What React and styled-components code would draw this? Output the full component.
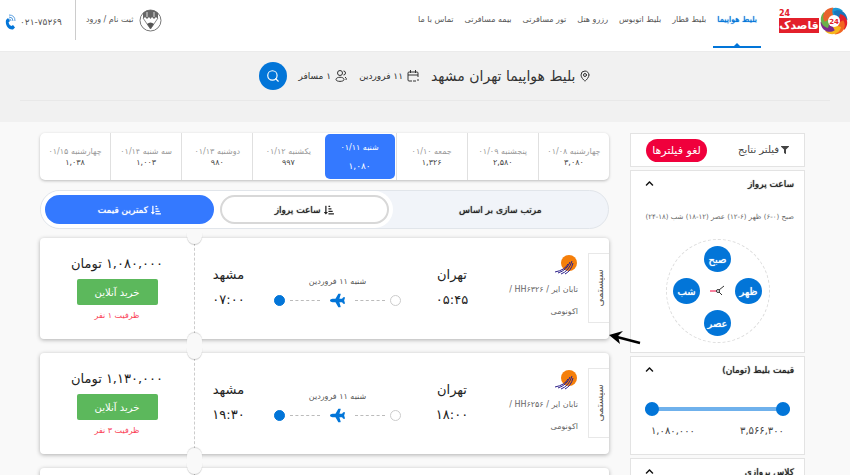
import React, { Component } from 'react';
import styled, { createGlobalStyle, css } from 'styled-components';
import { FaChevronUp, FaFilter, FaPlane, FaSortAmountDownAlt } from 'react-icons/fa';
import { LuMapPin, LuSearch } from 'react-icons/lu';

const GlobalStyle = createGlobalStyle`
	* {
		box-sizing: border-box;
	}

	html {
		scrollbar-width: none;
	}

	body {
		margin: 0;
		background: #f9f9f9;
		color: #222;
		font-family: "DejaVu Sans", sans-serif;
		font-size: 8px;
		line-height: 12px;
	}

	button, input {
		font-family: inherit;
	}

	h1, h2, p, ul {
		margin: 0;
		padding: 0;
		font-weight: normal;
	}

	svg {
		flex: none;
	}
`

// the bold cut is too wide for the small labels
const semiBold = css`
	text-shadow: 0 0 1px currentColor;
`

const Page = styled.div`
	min-height: 100vh;
`

const Header = styled.header`
	height: 51px;
	padding: 0 2px 0 5px;

	display: flex;
	align-items: flex-start;

	background: #fff;
`

const Logo = styled.a`
	margin-top: 7px;

	display: flex;
	align-items: center;
	gap: 1px;

	text-decoration: none;
`

const LogoName = styled.span`
	width: 40px;

	display: flex;
	flex-direction: column;

	background: linear-gradient(transparent 8px, #e3202b 8px);
	color: #fff;
	font-size: 11px;
	font-weight: bold;
	line-height: 15px;
	text-align: center;
	white-space: nowrap;
`

const LogoNumber = styled.span`
	color: #e3202b;
	font-size: 8px;
	line-height: 8px;
	text-align: left;
`

const Nav = styled.nav`
	height: 48px;
	margin-right: 18px;

	display: flex;
	gap: 3px;
`

const NavLink = styled.a`
	position: relative;
	padding: 14px 4px 0;

	color: #555;
	text-decoration: none;
	white-space: nowrap;

	${props => props.$active && css`
		${semiBold}
		color: #0275d8;
		border-bottom: 2px solid #0275d8;

		&::after {
			content: "";
			position: absolute;
			left: 50%;
			bottom: 0;
			margin-left: -3px;
			border: 3px solid transparent;
			border-top: 0;
			border-bottom-color: #0275d8;
		}
	`}
`

const Account = styled.a`
	height: 40px;
	margin-right: auto;
	padding-left: 10px;

	display: flex;
	align-items: center;
	gap: 5px;

	border-left: 1px solid #ccc;
	color: #555;
	text-decoration: none;
	white-space: nowrap;
`

const Phone = styled.a`
	height: 44px;
	margin-right: 13px;

	display: flex;
	align-items: center;
	gap: 4px;

	color: #555;
	font-size: 9px;
	text-decoration: none;
`

const SearchBand = styled.section`
	padding: 0 20px 21px;

	background: #f1f1f1;
	border-top: 1px solid #ebebeb;
`

const SearchRow = styled.div`
	height: 49px;

	display: flex;
	align-items: center;
	justify-content: center;
	gap: 12px;

	border-bottom: 1px solid #e8e8e8;
`

const SearchItem = styled.span`
	display: flex;
	align-items: center;
	gap: 4px;

	color: #333;
	font-size: 9px;
	white-space: nowrap;
`

const Title = styled.h1`
	font-size: 14px;
	line-height: 20px;
`

const SearchButton = styled.button`
	width: 28px;
	height: 28px;
	padding: 0;

	display: flex;
	align-items: center;
	justify-content: center;

	background: #0275d8;
	border: 0;
	border-radius: 50%;
	color: #fff;
`

const Content = styled.div`
	padding: 11px 45px 0 40px;

	display: flex;
	align-items: flex-start;
	gap: 21px;
`

const Sidebar = styled.aside`
	width: 175px;
	flex: none;

	display: flex;
	flex-direction: column;
	gap: 3px;
`

const Box = styled.section`
	background: #fff;
	border: 1px solid #e3e3e3;
`

const FilterBar = styled(Box)`
	height: 34px;
	padding: 0 15px;

	display: flex;
	align-items: center;
	justify-content: space-between;
`

const FilterTitle = styled.h2`
	display: flex;
	align-items: center;
	gap: 2px;

	color: #444;
	font-size: 10px;
`

const ClearButton = styled.button`
	width: 61px;
	height: 23px;
	padding: 0;

	background: #f0003c;
	border: 0;
	border-radius: 12px;
	color: #fff;
	font-size: 11px;
	white-space: nowrap;
`

const BoxHead = styled.h2`
	height: 25px;
	padding: 0 10px;

	display: flex;
	align-items: center;
	justify-content: space-between;

	${semiBold}
	color: #222;
	font-size: 9px;
`

const Collapse = styled.button`
	padding: 0 4px;

	display: flex;

	background: none;
	border: 0;
	color: #111;
`

const TimeBody = styled.div`
	padding: 15px 10px 9px;
`

const TimeNote = styled.p`
	color: #666;
	font-size: 7px;
	white-space: nowrap;
`

const Clock = styled.div`
	width: 104px;
	height: 104px;
	margin: 16px auto 0;

	display: grid;
	grid-template-columns: repeat(3, 27px);
	grid-template-rows: repeat(3, 26px);
	gap: 6px 4px;
	align-content: center;
	justify-content: center;

	border: 1px dashed #ddd;
	border-radius: 50%;
`

const ClockButton = styled.button`
	grid-area: ${props => props.$area};
	padding: 0;

	${semiBold}
	background: #0275d8;
	border: 0;
	border-radius: 50%;
	color: #fff;
	font-size: 10px;
`

const ClockHands = styled.svg`
	grid-area: 2 / 2;
	place-self: center;
`

const PriceBody = styled.div`
	padding: 20px 14px 16px;
`

const Slider = styled.div`
	position: relative;
	height: 14px;

	display: flex;
	align-items: center;

	&::before {
		content: "";
		height: 4px;
		flex: 1;
		background: #6fb1ec;
	}
`

const Range = styled.input`
	position: absolute;
	inset: 0;
	width: 100%;
	height: 100%;
	margin: 0;

	appearance: none;
	background: transparent;
	direction: ltr;
	pointer-events: none;

	&::-webkit-slider-thumb {
		width: 14px;
		height: 14px;
		appearance: none;
		background: #0275d8;
		border-radius: 50%;
		pointer-events: auto;
	}
`

const PriceLimits = styled.div`
	padding: 8px 6px 0;

	display: flex;
	justify-content: space-between;

	color: #444;
	font-size: 10px;
	line-height: 14px;
`

const Main = styled.main`
	flex: 1;
	min-width: 0;
`

const Days = styled.div`
	height: 47px;

	display: flex;

	background: #fff;
	border-radius: 5px;
	box-shadow: 0 1px 3px rgba(0, 0, 0, .25);
`

const Day = styled.button`
	padding: 0;
	flex: 1 1 0;
	min-width: 0;

	background: none;
	border: 0;
	border-left: 1px solid #e0e0e0;
	color: #444;
	font-size: 8px;
	line-height: 11px;
	white-space: nowrap;

	&:last-child {
		border-left: 0;
	}

	${props => props.$active && css`
		margin: 1px;
		background: #3479ff;
		border: 0;
		border-radius: 5px;
		color: #fff;
		font-size: 9px;
		line-height: 18px;
	`}
`

const DayName = styled.span`
	display: block;

	color: ${props => props.$active ? '#fff' : '#999'};
	font-size: 8px;
`

const Sort = styled.div`
	height: 39px;
	margin-top: 10px;

	display: flex;

	background: #f1f4f9;
	border: 1px solid #e1e5ea;
	border-radius: 20px;
`

const SortLabel = styled.span`
	flex: 1;
	align-self: center;

	${semiBold}
	color: #222;
	font-size: 9px;
	text-align: center;
`

const SortOptions = styled.div`
	width: 62%;
	padding: 4px;

	display: flex;
	gap: 6px;

	background: #fff;
	border-radius: 19px;
`

const SortButton = styled.button`
	padding: 0;
	flex: 1;

	display: flex;
	align-items: center;
	justify-content: center;
	gap: 3px;

	${semiBold}
	background: ${props => props.$active ? '#3479ff' : '#fff'};
	border: 2px solid ${props => props.$active ? '#3479ff' : '#d8d8d8'};
	border-radius: 15px;
	color: ${props => props.$active ? '#fff' : '#222'};
	font-size: 9px;
`

const Card = styled.article`
	height: 101px;
	margin-top: ${props => props.$first ? 9 : 14}px;

	display: grid;
	grid-template-columns: 21px 97px 78px 1fr 67px 155px;

	background: #fff;
	border-radius: 4px;
	box-shadow: 0 1px 4px rgba(0, 0, 0, .3);
`

const Tab = styled.span`
	height: 70px;
	margin-top: 15px;

	display: flex;
	align-items: center;
	justify-content: center;

	border: 1px solid #e8e8e8;
	border-right: 0;
	color: #555;
	font-size: 10px;
	line-height: 19px;
`

const TabText = styled.span`
	writing-mode: vertical-rl;
	transform: rotate(180deg);
`

const Airline = styled.div`
	padding: 16px 10px 0 0;

	color: #666;
	font-size: 8px;
	white-space: nowrap;

	svg {
		display: block;
	}

	p {
		padding-top: 6px;
		line-height: 16px;
	}
`

const Stop = styled.div`
	padding-top: 24px;

	color: #222;
	font-size: 13px;
	line-height: 25px;
	text-align: center;
`

const Route = styled.div`
	padding: 37px 12px 0;

	color: #555;
	font-size: 8px;
	line-height: 14px;
	text-align: center;
`

const Line = styled.div`
	height: 22px;

	display: flex;
	align-items: center;
	gap: 5px;

	color: #0275d8;

	svg {
		margin: 0 5px;
		transform: rotate(180deg);
	}
`

const Dash = styled.span`
	flex: 1;
	border-top: 1px dashed #bbb;
`

const Dot = styled.span`
	width: 11px;
	height: 11px;

	background: ${props => props.$filled ? '#0275d8' : '#fff'};
	border: 1px solid ${props => props.$filled ? '#0275d8' : '#ccc'};
	border-radius: 50%;
`

const Buy = styled.div`
	position: relative;
	padding: 15px 0 0;

	display: flex;
	flex-direction: column;
	align-items: center;

	border-right: 1px dashed #ccc;

	&::before, &::after {
		content: "";
		position: absolute;
		right: -8px;
		width: 15px;
		height: 12px;
		background: #f9f9f9;
	}

	&::before {
		top: -6px;
		border-radius: 0 0 8px 8px;
		box-shadow: 0 1px 1px rgba(0, 0, 0, .2);
	}

	&::after {
		bottom: -6px;
		border-radius: 8px 8px 0 0;
		box-shadow: 0 -1px 1px rgba(0, 0, 0, .15);
	}
`

const Price = styled.strong`
	color: #222;
	font-size: 13px;
	font-weight: normal;
	line-height: 22px;
`

const BuyButton = styled.button`
	width: 81px;
	height: 26px;
	margin-top: 4px;
	padding: 0;

	background: #5cb85c;
	border: 0;
	border-radius: 2px;
	color: #fff;
	font-size: 10px;
`

const Capacity = styled.span`
	margin-top: 4px;

	color: #fa3e54;
	font-size: 8px;
	line-height: 14px;
`

const CardWrap = styled.div`
	position: relative;
`

const Pointer = styled.svg`
	position: absolute;
	right: -32px;
	bottom: -6px;
`

const links = ['بلیط قطار', 'بلیط اتوبوس', 'رزرو هتل', 'تور مسافرتی', 'بیمه مسافرتی', 'تماس با ما'];

const days = [
	{ name: 'چهارشنبه ۰۱/۰۸', price: '۳,۰۸۰' },
	{ name: 'پنجشنبه ۰۱/۰۹', price: '۲,۵۸۰' },
	{ name: 'جمعه ۰۱/۱۰', price: '۱,۳۲۶' },
	{ name: 'شنبه ۰۱/۱۱', price: '۱,۰۸۰', active: true },
	{ name: 'یکشنبه ۰۱/۱۲', price: '۹۹۷' },
	{ name: 'دوشنبه ۰۱/۱۳', price: '۹۸۰' },
	{ name: 'سه شنبه ۰۱/۱۴', price: '۱,۰۰۳' },
	{ name: 'چهارشنبه ۰۱/۱۵', price: '۱,۰۳۸' },
];

const flights = [
	{ code: 'HH۶۳۲۶', start: '۰۵:۴۵', end: '۰۷:۰۰', price: '۱,۰۸۰,۰۰۰', seats: '۱', pointer: true },
	{ code: 'HH۶۲۵۶', start: '۱۸:۰۰', end: '۱۹:۳۰', price: '۱,۱۳۰,۰۰۰', seats: '۳' },
];

const petals = ['#1b9ad6', '#1b75bb', '#e3202b', '#f26522', '#f7b51c', '#7b2a8c', '#6ab04a', '#e8622c'];

const LogoMark = () => (
	<svg width="28" height="28" viewBox="-14 -14 28 28">
		{petals.map((color, i) => (
			<path key={color} d="M-7-6C-6-13 3-16 9-10C6-9 4-7 3-3Z" fill={color} transform={`rotate(${i * 45})`} />
		))}
		<circle r="6" fill="#fff" />
		<text y="3" fill="#e3202b" fontSize="7" fontWeight="bold" textAnchor="middle" direction="ltr">24</text>
	</svg>
)

const PencilIcon = () => (
	<svg width="23" height="23" viewBox="0 0 23 23">
		<circle cx="11.500" cy="11.500" r="10.500" fill="#fff" stroke="#777" />
		<path d="M4 4C8 0 15 0 19 4V10L17 8L15 10L13 8L11.500 10L10 8L8 10L6 8L4 10Z" fill="#666" />
		<path d="M8 3V8M15 3V8" stroke="#ddd" />
		<path d="M4 9L11.500 20L19 9" fill="none" stroke="#888" />
		<path d="M8 15Q11.500 12 15 15L11.500 20Z" fill="#555" />
	</svg>
)

const PhoneIcon = () => (
	<svg width="11" height="16" viewBox="0 0 11 16">
		<path d="M1 6L3 4L5 7L3.500 8.500Q4 11 6.500 12L8 11L10 13.500L8 15.500C3 16 0 11 1 6Z" fill="#0275d8" />
		<path d="M4 1Q10 1 10 7M4 3Q8 3 8 7M4 5Q6 5 6 7" fill="none" stroke="#5a9fe0" />
	</svg>
)

const CalendarIcon = () => (
	<svg width="12" height="12" viewBox="0 0 12 12" fill="none" stroke="#333">
		<path d="M5 11H2Q1 11 1 10V3Q1 2 2 2H10Q11 2 11 3V7M1 5H11M3.500 0V3M8.500 0V3M6 11H9M11 9V11" />
	</svg>
)

const UsersIcon = () => (
	<svg width="12" height="12" viewBox="0 0 12 12" fill="none" stroke="#333">
		<circle cx="5" cy="3" r="2.500" />
		<path d="M1 9.500C1 6.500 9 6.500 9 9.500C9 12 1 12 1 9.500ZM8.500 1Q10.500 1 10.500 3T8.500 5M10 7Q12 8 11 10" />
	</svg>
)

const AirlineIcon = () => (
	<svg width="23" height="22" viewBox="0 0 23 22">
		<circle cx="14" cy="9" r="8" fill="#f57f0a" />
		<path d="M0 18Q10 16 13 10M3 19Q12 16 15 8M6 20Q14 17 17 7M10 20Q16 17 18 9" fill="none" stroke="#2b1f8a" strokeWidth="1" />
	</svg>
)

const Head = ({ children }) => (
	<BoxHead>
		{children}
		<Collapse aria-label={children}><FaChevronUp size={9} /></Collapse>
	</BoxHead>
)

const Flight = ({ flight, first }) => (
	<CardWrap>
		<Card $first={first}>
			<Tab><TabText>سیستمی</TabText></Tab>
			<Airline>
				<AirlineIcon />
				<p>تابان ایر / {flight.code} /</p>
				<p>اکونومی</p>
			</Airline>
			<Stop>
				<p>تهران</p>
				<p>{flight.start}</p>
			</Stop>
			<Route>
				<p>شنبه ۱۱ فروردین</p>
				<Line>
					<Dot />
					<Dash />
					<FaPlane size={15} />
					<Dash />
					<Dot $filled />
				</Line>
			</Route>
			<Stop>
				<p>مشهد</p>
				<p>{flight.end}</p>
			</Stop>
			<Buy>
				<Price>{flight.price} تومان</Price>
				<BuyButton>خرید آنلاین</BuyButton>
				<Capacity>ظرفیت {flight.seats} نفر</Capacity>
			</Buy>
		</Card>
		{flight.pointer && (
			<Pointer width="32" height="14" viewBox="0 0 32 14">
				<path d="M31 12L8 6" stroke="#000" strokeWidth="2.500" />
				<path d="M0 4L14 0L9 5L11 13Z" />
			</Pointer>
		)}
	</CardWrap>
)

class App extends Component {
	render() {
		return(
			<Page dir="rtl" lang="fa">
				<GlobalStyle />
				<Header>
					<Logo href="#">
						<LogoMark />
						<LogoName>
							<LogoNumber>24</LogoNumber>
							قاصدک
						</LogoName>
					</Logo>
					<Nav>
						<NavLink href="#" $active>بلیط هواپیما</NavLink>
						{links.map(link => <NavLink href="#" key={link}>{link}</NavLink>)}
					</Nav>
					<Account href="#">
						<PencilIcon />
						ثبت نام / ورود
					</Account>
					<Phone href="#">
						<span dir="ltr">۰۲۱-۷۵۲۶۹</span>
						<PhoneIcon />
					</Phone>
				</Header>
				<SearchBand>
					<SearchRow>
						<SearchItem>
							<LuMapPin size={12} />
							<Title>بلیط هواپیما تهران مشهد</Title>
						</SearchItem>
						<SearchItem><CalendarIcon />۱۱ فروردین</SearchItem>
						<SearchItem><UsersIcon />۱ مسافر</SearchItem>
						<SearchButton aria-label="جستجو"><LuSearch size={14} /></SearchButton>
					</SearchRow>
				</SearchBand>
				<Content>
					<Sidebar>
						<FilterBar>
							<FilterTitle><FaFilter size={8} />فیلتر نتایج</FilterTitle>
							<ClearButton>لغو فیلترها</ClearButton>
						</FilterBar>
						<Box>
							<Head>ساعت پرواز</Head>
							<TimeBody>
								<TimeNote>صبح (۰-۶) ظهر (۶-۱۲) عصر (۱۲-۱۸) شب (۱۸-۲۴)</TimeNote>
								<Clock>
									<ClockButton $area="1 / 2">صبح</ClockButton>
									<ClockButton $area="2 / 1">ظهر</ClockButton>
									<ClockHands width="15" height="12" viewBox="0 0 15 12" fill="none">
										<path d="M0 6H7" stroke="#f0003c" />
										<path d="M9 5L14 1M9 7L12 10" stroke="#333" />
										<circle cx="8" cy="6" r="1.500" stroke="#333" />
									</ClockHands>
									<ClockButton $area="2 / 3">شب</ClockButton>
									<ClockButton $area="3 / 2">عصر</ClockButton>
								</Clock>
							</TimeBody>
						</Box>
						<Box>
							<Head>قیمت بلیط (تومان)</Head>
							<PriceBody>
								<Slider>
									<Range type="range" aria-label="حداقل قیمت" min="1080000" max="3566300" defaultValue="1080000" />
									<Range type="range" aria-label="حداکثر قیمت" min="1080000" max="3566300" defaultValue="3566300" />
								</Slider>
								<PriceLimits>
									<span>۳,۵۶۶,۳۰۰</span>
									<span>۱,۰۸۰,۰۰۰</span>
								</PriceLimits>
							</PriceBody>
						</Box>
						<Box>
							<Head>کلاس پروازی</Head>
						</Box>
					</Sidebar>
					<Main>
						<Days>
							{days.map(day => (
								<Day key={day.name} $active={day.active}>
									<DayName $active={day.active}>{day.name}</DayName>
									{day.price}
								</Day>
							))}
						</Days>
						<Sort>
							<SortLabel>مرتب سازی بر اساس</SortLabel>
							<SortOptions>
								<SortButton><FaSortAmountDownAlt size={10} />ساعت پرواز</SortButton>
								<SortButton $active><FaSortAmountDownAlt size={10} />کمترین قیمت</SortButton>
							</SortOptions>
						</Sort>
						{flights.map((flight, i) => <Flight key={flight.code} flight={flight} first={i === 0} />)}
						<Card>
							<span /><span /><span /><span /><span />
							<Buy />
						</Card>
					</Main>
				</Content>
			</Page>
		)
	}
}

export default App;
